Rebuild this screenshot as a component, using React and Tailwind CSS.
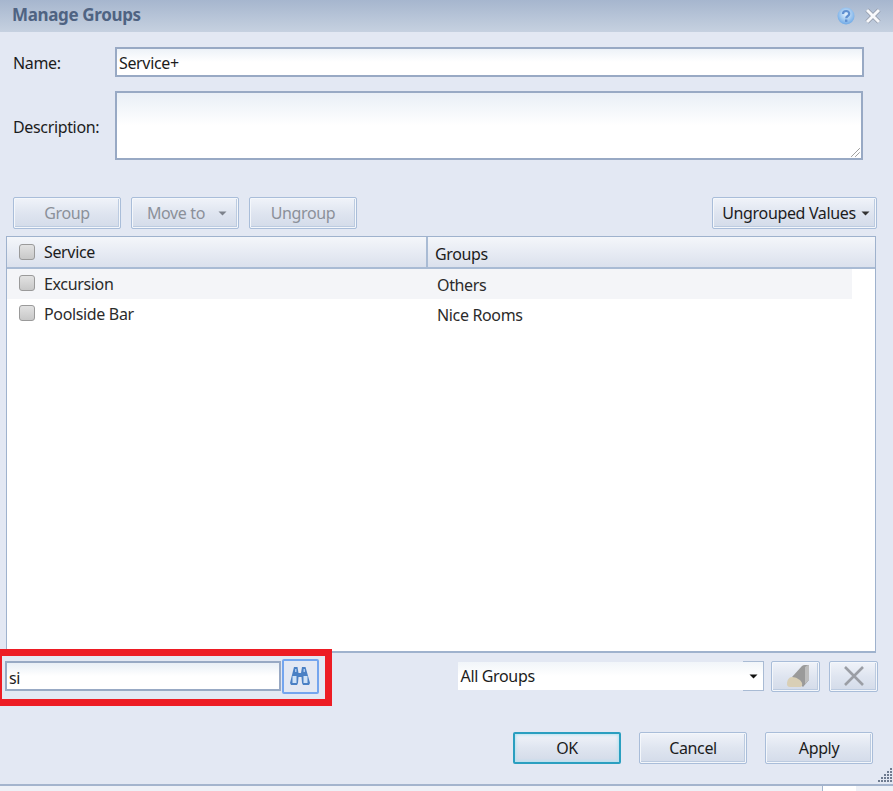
import React from "react";

function Btn({ children, className = "", disabled = false }) {
  return (
    <button
      className={`flex items-center justify-center rounded-[2px] border border-[#a9bdd9] bg-gradient-to-b from-[#f0f3f9] via-[#dfe5f0] to-[#d3dbe9] shadow-[inset_0_0_0_1px_#f4f7fb,inset_-1px_-1px_0_1px_#bccbe0] text-[16px] ${disabled ? "text-[#8b9099]" : "text-[#1c1c1c]"} ${className}`}
    >
      {children}
    </button>
  );
}

function Caret({ className = "", color = "#333" }) {
  return (
    <svg width="9" height="5" viewBox="0 0 9 5" className={className}>
      <path d="M0.5 0.5h8L4.5 4.5z" fill={color} />
    </svg>
  );
}

function Check({ className = "" }) {
  return (
    <span className={`block w-[16px] h-[16px] rounded-[3px] border border-[#9a9a9a] bg-gradient-to-b from-[#e2e2e2] to-[#c8c8c8] ${className}`} />
  );
}

function Row({ name, group, shaded }) {
  return (
    <div className={`flex h-[30px] w-[845px] ${shaded ? "bg-[#f4f5f8]" : "bg-white"}`}>
      <div className="w-[421px] flex items-center pl-[12px] gap-[9px]">
        <Check className="mb-[3px]" />
        <span className="text-[#2b2b2b]">{name}</span>
      </div>
      <div className="flex items-center pl-[9px] pt-[2px] text-[#2b2b2b]">{group}</div>
    </div>
  );
}

export default function App() {
  return (
    <div
      className="relative w-[893px] h-[791px] overflow-hidden bg-[#e3e8f3] flex flex-col text-[16px] text-[#1c1c1c]"
      style={{ fontFamily: '"Noto Sans", "Open Sans", sans-serif', letterSpacing: "-0.35px" }}
    >
      {/* Title bar */}
      <div className="h-[32px] shrink-0 bg-gradient-to-b from-[#a6b6ce] to-[#c6d1e0] flex items-center pl-[12px] pr-[12px]">
        <span className="font-bold text-[17px] tracking-[-0.35px] text-[#4f6382] flex-1 pb-[2px]">Manage Groups</span>
        <svg width="18" height="18" viewBox="0 0 18 18" className="mr-[10px]">
          <defs>
            <radialGradient id="h" cx="50%" cy="40%" r="60%">
              <stop offset="0%" stopColor="#e2f0fd" />
              <stop offset="100%" stopColor="#6ea9e6" />
            </radialGradient>
          </defs>
          <circle cx="9" cy="9" r="8.5" fill="url(#h)" />
          <path d="M6 7c0-4 6.5-4 6.2 0 0 2-3 2-3 4.2" fill="none" stroke="#5f8fd0" strokeWidth="2.2" />
          <rect x="8" y="12.5" width="2.4" height="2.4" fill="#5f8fd0" />
        </svg>
        <svg width="16" height="16" viewBox="0 0 16 16">
          <path d="M2 2l12 12M14 2L2 14" stroke="#8d94a3" strokeWidth="4.4" />
          <path d="M2 2l12 12M14 2L2 14" stroke="#f7f8fb" strokeWidth="3" />
        </svg>
      </div>

      {/* Name */}
      <div className="flex items-center pl-[13px] mt-[15px] h-[30px]">
        <span className="w-[102px] pt-[2px]">Name:</span>
        <div className="w-[749px] h-[30px] border-2 border-[#98a9c4] bg-gradient-to-b from-[#edf2f8] via-white to-white flex items-center pl-[2px] pt-[2px]">
          Service+
        </div>
      </div>

      {/* Description */}
      <div className="flex items-center pl-[13px] mt-[14px] h-[69px]">
        <span className="w-[102px] pt-[3px]">Description:</span>
        <div className="relative w-[748px] h-[69px] border-2 border-[#98a9c4] bg-gradient-to-b from-[#e9eff6] via-white to-white">
          <svg width="9" height="9" viewBox="0 0 9 9" className="absolute right-[1px] bottom-[1px]">
            <path d="M0.5 8.5L8.5 0.5M4.5 8.5L8.5 4.5" stroke="#555" strokeWidth="1" strokeDasharray="1 0.5" />
          </svg>
        </div>
      </div>

      {/* Toolbar */}
      <div className="flex items-center pl-[13px] pr-[16px] mt-[37px] h-[32px] gap-[10px]">
        <Btn disabled className="w-[108px] h-[32px]">Group</Btn>
        <Btn disabled className="w-[108px] h-[32px] gap-[13px] pl-[4px]">
          Move to <Caret color="#7d828c" />
        </Btn>
        <Btn disabled className="w-[108px] h-[32px]">Ungroup</Btn>
        <Btn className="ml-auto w-[165px] h-[32px] gap-[5px] pl-[3px]">
          Ungrouped Values <Caret />
        </Btn>
      </div>

      {/* Table */}
      <div className="mt-[7px] ml-[6px] w-[870px] h-[417px] border-t border-x border-b-2 border-[#9fb2cd] bg-white flex flex-col">
        <div className="h-[32px] shrink-0 flex bg-gradient-to-b from-[#f4f6fa] to-[#dbe1ed] border-b-2 border-[#a9bbd4]">
          <div className="w-[421px] flex items-center pl-[12px] gap-[9px] border-r-2 border-[#a9bbd4]">
            <Check />
            <span>Service</span>
          </div>
          <div className="flex items-center pl-[7px] pt-[3px]">Groups</div>
        </div>
        <Row name="Excursion" group="Others" shaded />
        <Row name="Poolside Bar" group="Nice Rooms" />
      </div>

      {/* Search / filter row */}
      <div className="flex items-center h-[36px] mt-[5px] pl-[5px] pr-[15px]">
        <div className="w-[276px] h-[30px] border-2 border-[#98a9c4] bg-gradient-to-b from-[#e9eff6] via-white to-white flex items-center pl-[2px] pt-[3px]">
          si
        </div>
        <div className="ml-[1px] w-[37px] h-[35px] rounded-[2px] border-2 border-[#74a5ee] bg-[#e3e8f3] flex items-center justify-center">
          <svg width="22" height="20" viewBox="0 0 22 20">
            <path d="M5 1h3.5l1 6H12l1-6h3.5l4.5 16-1 2h-6l-1-2-.5-6h-3l-.5 6-1 2H2l-1-2z" fill="#4a80c4" />
            <path d="M3.5 10h4v7h-4zM14.5 10h4v7h-4z" fill="#cfe2f7" />
            <path d="M6 3h1.5v3H6zM14.5 3H16v3h-1.5z" fill="#a9c8ee" />
          </svg>
        </div>
        <div className="relative ml-[139px] w-[307px] h-[28px] flex items-center pl-[3px] bg-gradient-to-b from-[#f1f5f9] via-white to-white">
          All Groups
          <div className="absolute right-0 top-[-1px] w-[21px] h-[30px] border-r border-b border-t border-[#a9bbd4] flex items-center justify-center">
            <Caret color="#111" />
          </div>
        </div>
        <Btn className="ml-[7px] w-[49px] h-[31px]">
          <svg width="24" height="24" viewBox="0 0 24 24" className="ml-[4px]">
            <path d="M6 13L16 2q1-1 3-1h4v15l-6 7z" fill="#9a9a9a" />
            <path d="M19 3q2-2 4-2v15l-4 4z" fill="#bdbdbd" />
            <path d="M1 20c0-4 2-7 5-7 4 0 9 3 10 6 .5 2 0 4-2 4H4c-2 0-3-1-3-3z" fill="#d9cfb6" />
          </svg>
        </Btn>
        <Btn className="ml-[9px] w-[49px] h-[31px]">
          <svg width="20" height="20" viewBox="0 0 20 20">
            <path d="M1 1l18 18M19 1L1 19" stroke="#9b9ea5" strokeWidth="2.6" />
          </svg>
        </Btn>
      </div>

      {/* Action buttons */}
      <div className="flex justify-end gap-[18px] pr-[20px] mt-[38px]">
        <Btn className="w-[108px] h-[32px] !border-[#2a9fc0] !border-2 !shadow-[inset_0_0_3px_1px_#b5e2f0]">OK</Btn>
        <Btn className="w-[108px] h-[32px]">Cancel</Btn>
        <Btn className="w-[108px] h-[32px]">Apply</Btn>
      </div>

      {/* Bottom strip */}
      <div className="relative mt-auto h-[7px] border-t-2 border-[#a4b4cd] bg-[#eef1f7]">
        <div className="absolute left-[822px] top-0 h-full w-[34px] border-l border-[#a4b4cd] bg-white" />
      </div>

      {/* Resize grip */}
      <svg width="17" height="16" viewBox="0 0 17 16" className="absolute right-0 bottom-[8px]">
        <g fill="#6f7c90">
          {[[14,1],[11,4],[14,4],[8,7],[11,7],[14,7],[5,10],[8,10],[11,10],[14,10],[2,13],[5,13],[8,13],[11,13],[14,13]].map(([x, y]) => (
            <rect key={`${x}-${y}`} x={x} y={y} width="2" height="2" />
          ))}
        </g>
      </svg>

      {/* Red annotation */}
      <div className="absolute left-[-5px] top-[649px] w-[337px] h-[57px] border-[7px] border-[#ed1c24]" />
    </div>
  );
}
